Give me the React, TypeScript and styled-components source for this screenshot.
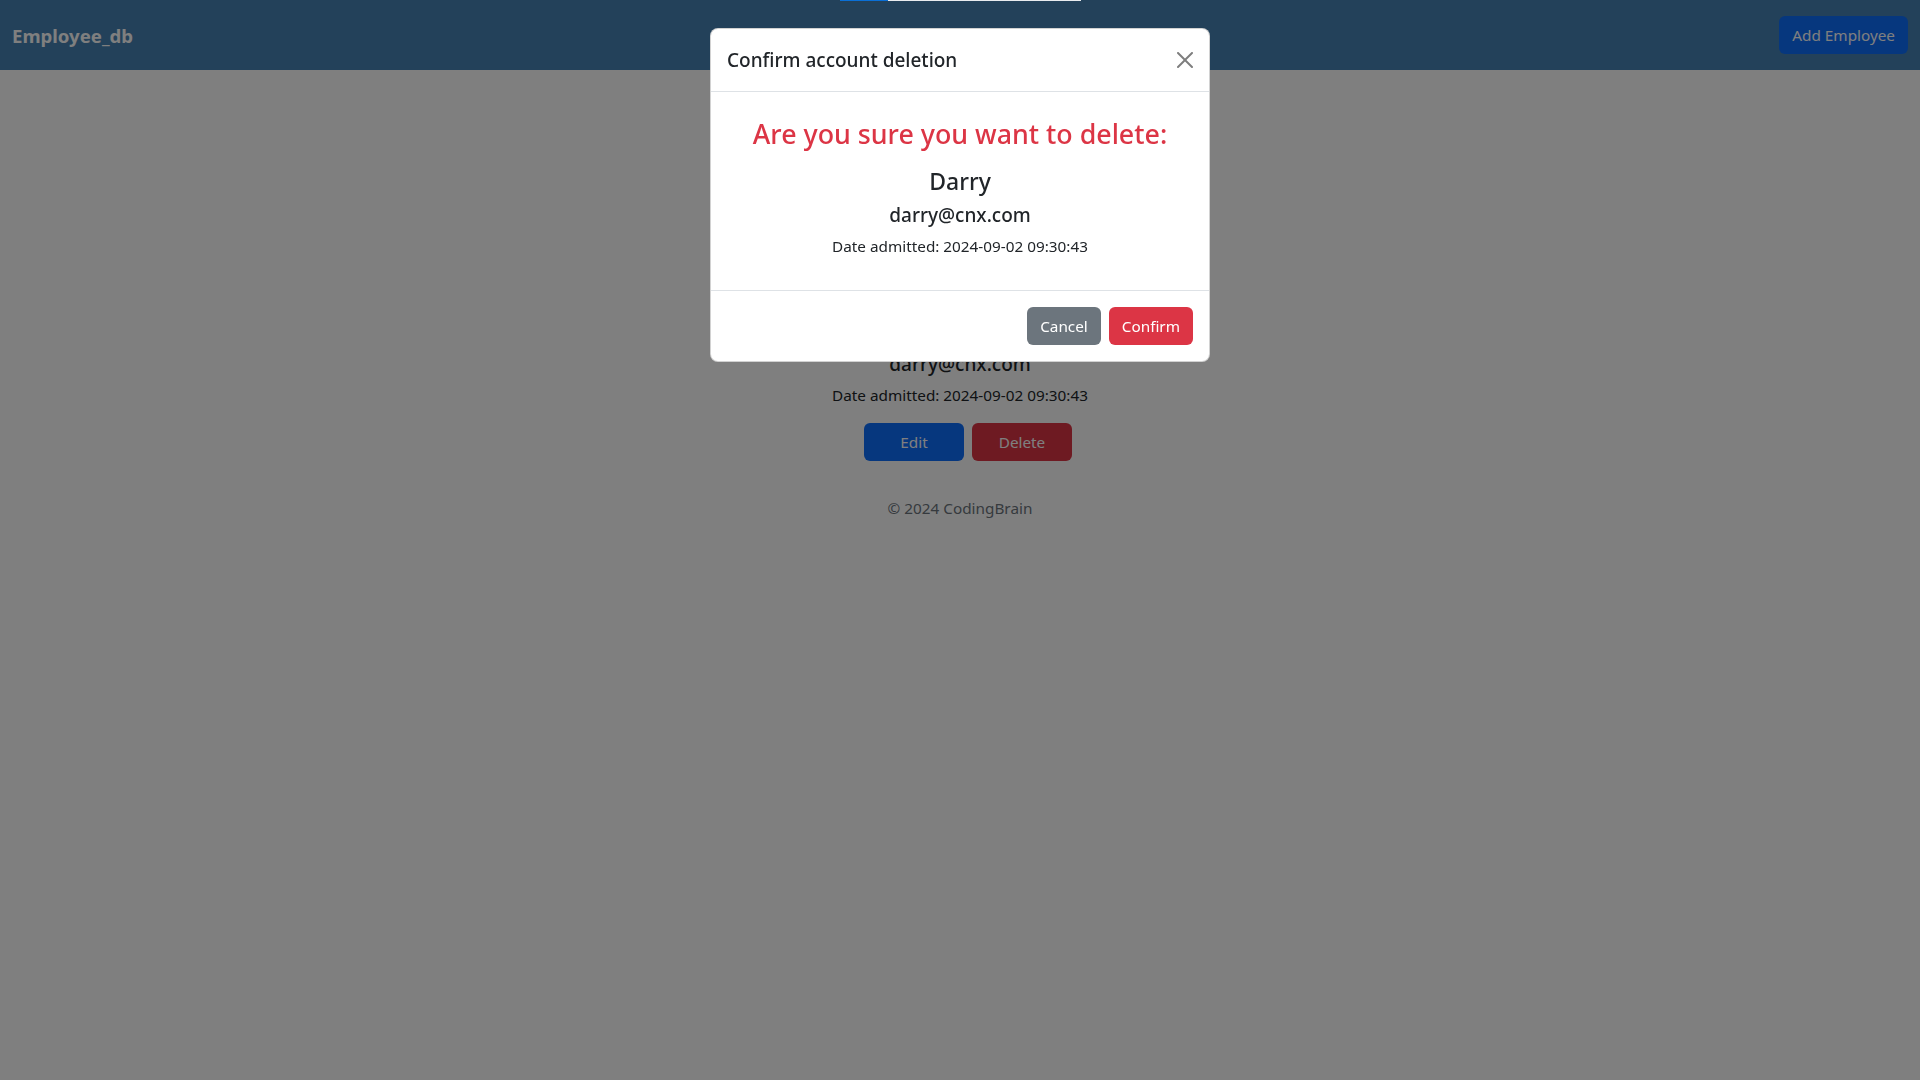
import React from "react";
import styled, { createGlobalStyle } from "styled-components";

const GlobalStyle = createGlobalStyle`
  * { box-sizing: border-box; }
  html, body { margin: 0; padding: 0; }
  body {
    font-family: "Noto Sans", "Open Sans", sans-serif;
    font-size: 15.3px;
    line-height: 24px;
    color: #212529;
    background: #ffffff;
  }
`;

const Navbar = styled.nav`
  height: 70px;
  background: #4682b4;
  display: flex;
  align-items: center;
  justify-content: space-between;
  padding: 0 12px;
`;

const Brand = styled.a`
  color: #ffffff;
  font-size: 18.6px;
  font-weight: 700;
  line-height: 30px;
  padding-top: 2px;
  text-decoration: none;
`;

const Button = styled.button<{ $variant: "primary" | "danger" | "secondary"; $width?: number }>`
  height: 38px;
  padding: 0 12px;
  ${(p) => (p.$width ? `width: ${p.$width}px;` : "")}
  border: 1px solid transparent;
  border-radius: 6px;
  font-family: inherit;
  font-size: 15.3px;
  line-height: 24px;
  color: #ffffff;
  cursor: pointer;
  background: ${(p) =>
    p.$variant === "primary" ? "#0d6efd" : p.$variant === "danger" ? "#dc3545" : "#6c757d"};
`;

const Main = styled.main`
  display: flex;
  flex-direction: column;
  align-items: center;
  text-align: center;
  padding-top: 245px;
`;

const Card = styled.section`
  display: flex;
  flex-direction: column;
  align-items: center;
`;

const Name = styled.h4`
  margin: 0 0 8px;
  font-size: 23px;
  font-weight: 500;
  line-height: 28.8px;
`;

const Email = styled.h5`
  margin: 0 0 7px;
  font-size: 19px;
  font-weight: 500;
  line-height: 24px;
`;

const DateText = styled.p`
  margin: 0 0 16px;
  font-size: 15.3px;
  line-height: 24px;
`;

const ButtonRow = styled.div`
  display: flex;
  gap: 8px;
  padding-left: 16px;
`;

const Footer = styled.footer`
  margin-top: 35px;
  color: #6c757d;
  font-size: 15.3px;
`;

const TopProgress = styled.div`
  position: fixed;
  top: 0;
  left: 840px;
  width: 241px;
  height: 1px;
  background: #e9ecef;
  z-index: 1100;
  display: flex;
`;

const TopProgressFill = styled.div`
  height: 100%;
  background: #0a6fd6;
`;

const Backdrop = styled.div`
  position: fixed;
  inset: 0;
  background: rgba(0, 0, 0, 0.5);
  z-index: 1040;
`;

const ModalWrap = styled.div`
  position: fixed;
  inset: 0;
  z-index: 1050;
  display: flex;
  justify-content: center;
  align-items: flex-start;
  padding-top: 28px;
`;

const ModalContent = styled.div`
  width: 500px;
  background: #ffffff;
  border: 1px solid rgba(0, 0, 0, 0.175);
  border-radius: 8px;
  display: flex;
  flex-direction: column;
`;

const ModalHeader = styled.div`
  display: flex;
  align-items: center;
  justify-content: space-between;
  padding: 16px;
  border-bottom: 1px solid #dee2e6;
`;

const ModalTitle = styled.h5`
  margin: 0;
  font-size: 19px;
  font-weight: 500;
  line-height: 30px;
`;

const CloseButton = styled.button`
  width: 32px;
  height: 32px;
  padding: 8px;
  margin: -8px -8px -8px auto;
  border: none;
  background: transparent;
  opacity: 0.5;
  display: flex;
  align-items: center;
  justify-content: center;
  cursor: pointer;
`;

const ModalBody = styled.div`
  padding: 16px;
  text-align: center;
`;

const Warning = styled.h2`
  margin: 9px 0 16px;
  color: #dc3545;
  font-size: 26.8px;
  font-weight: 500;
  line-height: 33.6px;
`;

const ModalFooter = styled.div`
  display: flex;
  justify-content: flex-end;
  gap: 8px;
  padding: 16px;
  border-top: 1px solid #dee2e6;
`;

export default function App() {
  return (
    <>
      <GlobalStyle />
      <Navbar>
        <Brand href="#">Employee_db</Brand>
        <Button $variant="primary">Add Employee</Button>
      </Navbar>
      <Main>
        <Card>
          <Name>Darry</Name>
          <Email>darry@cnx.com</Email>
          <DateText>Date admitted: 2024-09-02 09:30:43</DateText>
          <ButtonRow>
            <Button $variant="primary" $width={100}>Edit</Button>
            <Button $variant="danger" $width={100}>Delete</Button>
          </ButtonRow>
        </Card>
        <Footer>© 2024 CodingBrain</Footer>
      </Main>

      <Backdrop />
      <TopProgress>
        <TopProgressFill style={{ width: "20%" }} />
      </TopProgress>
      <ModalWrap>
        <ModalContent>
          <ModalHeader>
            <ModalTitle>Confirm account deletion</ModalTitle>
            <CloseButton aria-label="Close">
              <svg width="16" height="16" viewBox="0 0 16 16">
                <path
                  fill="#000"
                  d="M.293.293a1 1 0 0 1 1.414 0L8 6.586 14.293.293a1 1 0 1 1 1.414 1.414L9.414 8l6.293 6.293a1 1 0 0 1-1.414 1.414L8 9.414l-6.293 6.293a1 1 0 0 1-1.414-1.414L6.586 8 .293 1.707a1 1 0 0 1 0-1.414z"
                />
              </svg>
            </CloseButton>
          </ModalHeader>
          <ModalBody>
            <Warning>Are you sure you want to delete:</Warning>
            <Name>Darry</Name>
            <Email>darry@cnx.com</Email>
            <DateText>Date admitted: 2024-09-02 09:30:43</DateText>
          </ModalBody>
          <ModalFooter>
            <Button $variant="secondary">Cancel</Button>
            <Button $variant="danger">Confirm</Button>
          </ModalFooter>
        </ModalContent>
      </ModalWrap>
    </>
  );
}
